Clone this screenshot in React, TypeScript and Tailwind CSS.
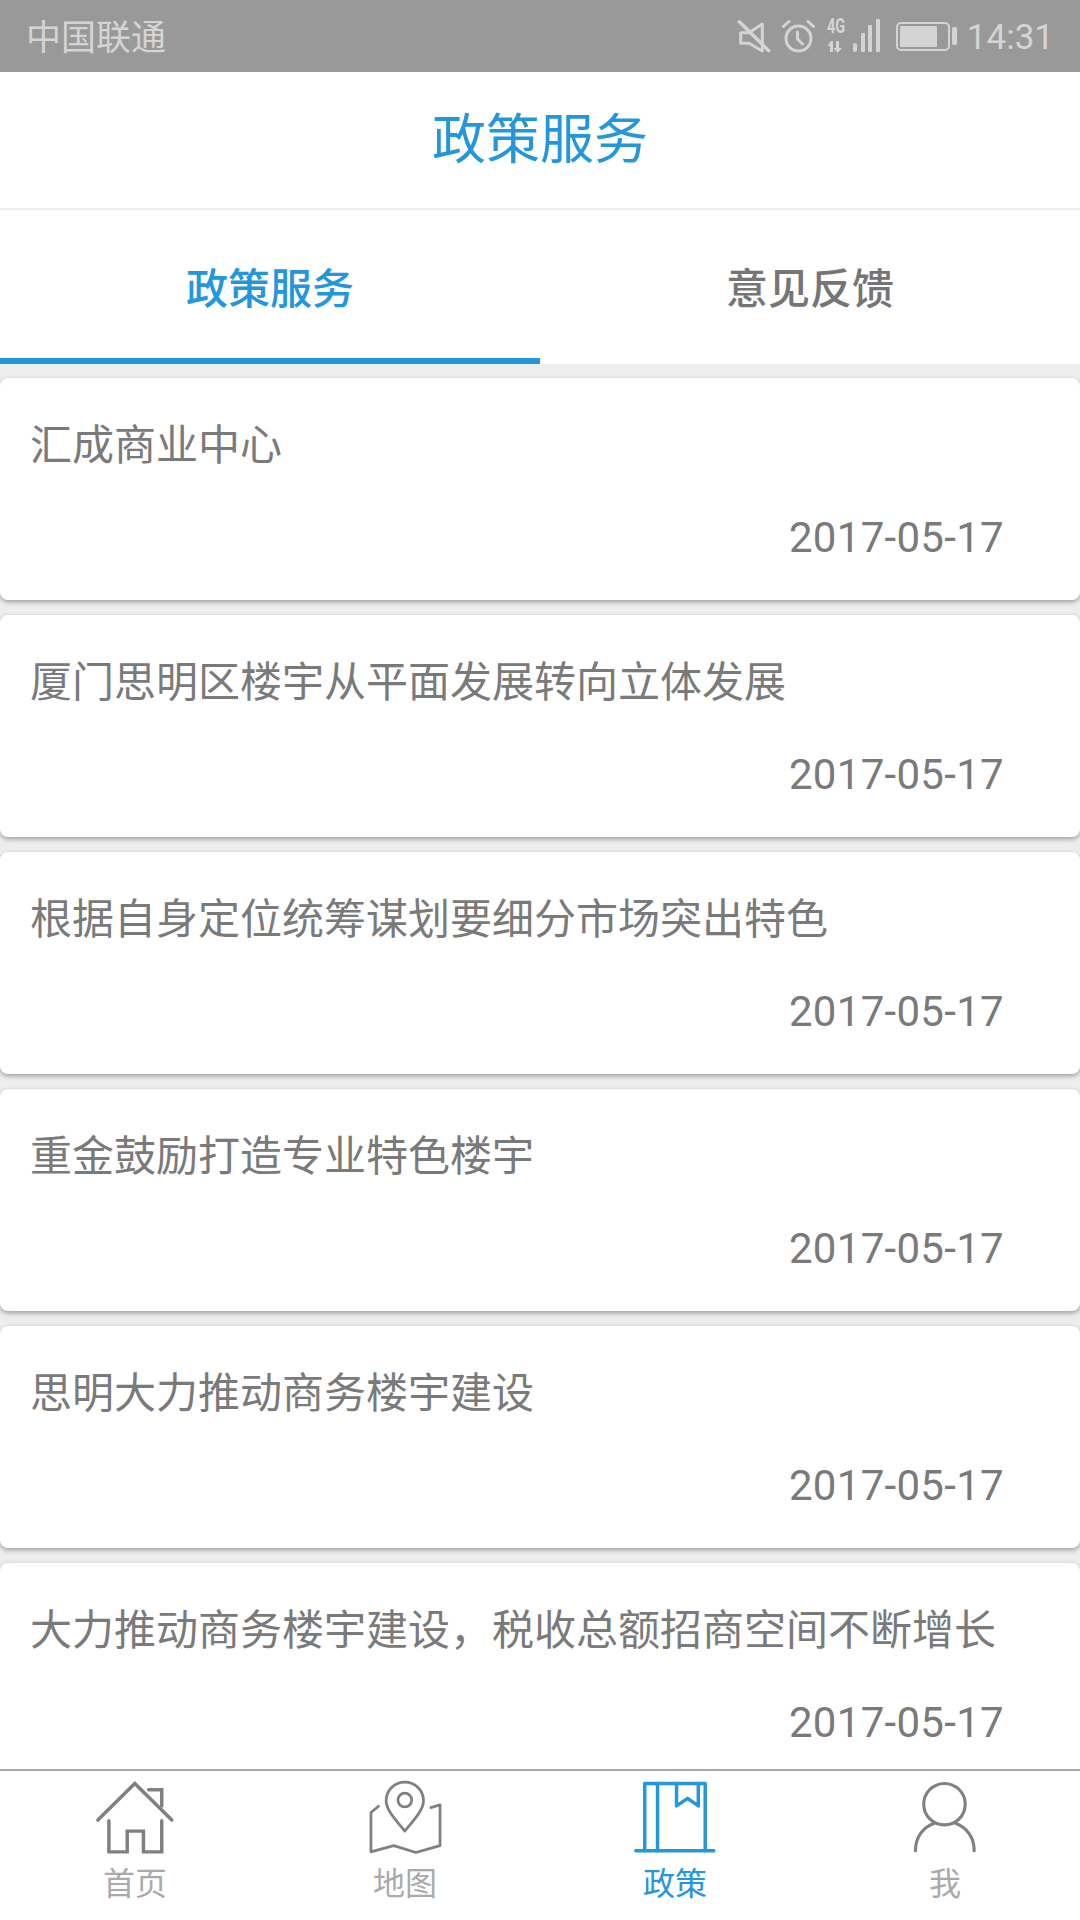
import React from 'react';

const cjk = "font-['Roboto','Noto_Sans_CJK_SC',sans-serif]";

const items = [
  '汇成商业中心',
  '厦门思明区楼宇从平面发展转向立体发展',
  '根据自身定位统筹谋划要细分市场突出特色',
  '重金鼓励打造专业特色楼宇',
  '思明大力推动商务楼宇建设',
  '大力推动商务楼宇建设，税收总额招商空间不断增长',
];

const MuteIcon = () => (
  <svg width="34" height="33" viewBox="0 0 34 33" fill="none" stroke="#d4d4d4" strokeWidth="3">
    <path d="M25.3 4L12 12.7H3.7v10.6H12L25.3 31z" strokeLinejoin="round" />
    <path d="M1.3 0.7l31.4 31" strokeWidth="3.5" />
  </svg>
);

const AlarmIcon = () => (
  <svg width="33" height="33" viewBox="0 0 33 33" fill="none" stroke="#d4d4d4" strokeWidth="3">
    <circle cx="16.5" cy="18.5" r="12.5" />
    <path d="M15.5 12v7l5 5M1.5 6.5L7 1.5M31.5 6.5L26 1.5" strokeLinecap="round" />
  </svg>
);

const SignalIcon = () => (
  <div className="relative w-[54px] h-[34px]">
    <span className="absolute left-0 top-[-3px] origin-left scale-x-[0.72] text-[20px] leading-[20px] font-bold text-[#d4d4d4] font-['Roboto',sans-serif]">4G</span>
    <svg className="absolute inset-0" width="54" height="34" viewBox="0 0 54 34" fill="#d4d4d4">
      <path d="M4 22l-3.500 5H3v6h3V22zM9 22h3v7h3l-4.500 5L6.500 29H9z" />
      <rect x="26" y="24" width="4" height="9" rx="2" />
      <rect x="34" y="14" width="4" height="19" rx="1" />
      <rect x="41" y="6" width="4" height="27" rx="1" />
      <rect x="49" y="0" width="4" height="33" rx="1" />
    </svg>
  </div>
);

const BatteryIcon = () => (
  <svg width="61" height="29" viewBox="0 0 61 29" fill="none">
    <rect x="1" y="1" width="52" height="27" rx="4" stroke="#d4d4d4" strokeWidth="2" />
    <rect x="4" y="4" width="37" height="21" rx="1" fill="#d4d4d4" />
    <rect x="56" y="5" width="5" height="18" rx="2" fill="#d4d4d4" />
  </svg>
);

const HomeIcon = () => (
  <svg width="83" height="76" viewBox="272 60 240 220" fill="none" stroke="#808080" strokeWidth="10" strokeLinecap="round">
    <path d="M283 176L390 70l107 106" />
    <path d="M430 88h38v47" />
    <path d="M315 178v90h53v-60h47v60h53v-90" />
  </svg>
);

const MapIcon = () => (
  <svg width="83" height="76" viewBox="1057 60 240 220" fill="none" stroke="#808080" strokeWidth="8" strokeLinecap="round" strokeLinejoin="round">
    <path d="M1175 208c-24-30-54-60-54-88a54 54 0 0 1 108 0c0 28-30 58-54 88z" />
    <circle cx="1175" cy="118" r="20" />
    <path d="M1099 136l-22 18v114l66-18 64 20 70-20V132l-27 8" />
  </svg>
);

const BookIcon = () => (
  <svg width="83" height="76" viewBox="272 60 240 220" fill="none" stroke="#2396dc" strokeWidth="10" strokeLinecap="round" strokeLinejoin="round">
    <path d="M303 265V70h175v195" />
    <path d="M340 70v195" />
    <path d="M395 70v65l32-22 31 22V70" />
    <path d="M277 265h226" />
  </svg>
);

const UserIcon = () => (
  <svg width="83" height="76" viewBox="1055 60 240 220" fill="none" stroke="#808080" strokeWidth="9" strokeLinecap="round">
    <circle cx="1172" cy="130" r="60" />
    <path d="M1088 265c0-40 22-68 54-80M1258 265c0-40-22-68-54-80" />
  </svg>
);

const NavItem: React.FC<{ label: string; active?: boolean; icon: React.ReactNode }> = ({ label, active, icon }) => (
  <div className="flex flex-col items-center">
    <div className="h-[76px]">{icon}</div>
    <span className={`text-[32px] leading-[36px] mt-[10px] ${active ? 'text-[#2396dc]' : 'text-[#aaaaaa]'}`}>{label}</span>
  </div>
);

const App: React.FC = () => (
  <div className={`w-[1080px] h-[1920px] flex flex-col overflow-hidden bg-[#eeeeee] ${cjk}`}>
    <div className="h-[72px] shrink-0 bg-[#999999] flex items-center justify-between pl-[26px] pr-[26px]">
      <span className="text-[35px] leading-[40px] pt-[5px] text-[#d4d4d4]">中国联通</span>
      <div className="flex items-center">
        <MuteIcon />
        <div className="ml-[11px]"><AlarmIcon /></div>
        <div className="ml-[12px]"><SignalIcon /></div>
        <div className="ml-[15px]"><BatteryIcon /></div>
        <span className="ml-[10px] text-[35px] leading-[40px] pt-[3px] text-[#d4d4d4]">14:31</span>
      </div>
    </div>

    <div className="h-[138px] shrink-0 bg-white border-b-2 border-[#eeeeee] flex items-center justify-center pt-[1px]">
      <h1 className="text-[54px] font-normal text-[#2396dc]">政策服务</h1>
    </div>

    <div className="h-[154px] shrink-0 bg-white grid grid-cols-2">
      <div className="flex items-center justify-center pt-[11px] border-b-[6px] border-[#2396dc] text-[42px] font-medium text-[#2396dc]">政策服务</div>
      <div className="flex items-center justify-center pt-[11px] border-b-[6px] border-transparent text-[42px] font-medium text-[#757575]">意见反馈</div>
    </div>

    <div className="flex-1 overflow-hidden flex flex-col gap-[15px] pt-[14px]">
      {items.map((title) => (
        <div key={title} className="shrink-0 h-[222px] bg-white rounded-[8px] shadow-[0_2px_5px_rgba(0,0,0,0.35)] pl-[30px] pr-[76px] pt-[40px]">
          <div className="text-[42px] leading-[56px] text-[#7a7a7a]">{title}</div>
          <div className="mt-[36px] text-right text-[42px] tracking-[0.3px] leading-[56px] text-[#7a7a7a]">2017-05-17</div>
        </div>
      ))}
    </div>

    <div className="h-[151px] shrink-0 bg-white border-t-2 border-[#aaaaaa] grid grid-cols-4 pt-[9px]">
      <NavItem label="首页" icon={<HomeIcon />} />
      <NavItem label="地图" icon={<MapIcon />} />
      <NavItem label="政策" active icon={<BookIcon />} />
      <NavItem label="我" icon={<UserIcon />} />
    </div>
  </div>
);

export default App;
